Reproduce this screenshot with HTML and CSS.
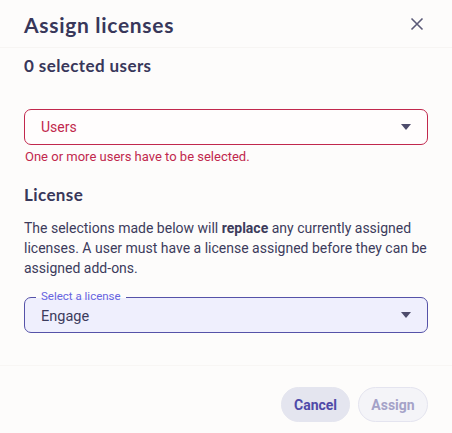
FILE: index.html
```html
<!DOCTYPE html>
<html>
<head>
<meta charset="utf-8">
<link rel="stylesheet" href="styles.css">
</head>
<body>
<div class="dialog">
  <header class="head">
    <h1 class="title">Assign licenses</h1>
    <button class="close" aria-label="Close">
      <svg width="14" height="14" viewBox="0 0 14 14"><path d="M1.5 1.5L12.5 12.5M12.5 1.5L1.5 12.5" stroke="#5b5a78" stroke-width="1.6" fill="none"/></svg>
    </button>
  </header>
  <main class="body">
    <h2 class="count">0 selected users</h2>
    <div class="select error">
      <span class="value">Users</span>
      <span class="caret"></span>
    </div>
    <p class="err-msg">One or more users have to be selected.</p>
    <h2 class="section">License</h2>
    <p class="desc">The selections made below will <b>replace</b> any currently assigned licenses. A user must have a license assigned before they can be assigned add-ons.</p>
    <div class="select filled">
      <span class="label">Select a license</span>
      <span class="value">Engage</span>
      <span class="caret"></span>
    </div>
  </main>
  <footer class="foot">
    <button class="btn cancel">Cancel</button>
    <button class="btn assign" disabled>Assign</button>
  </footer>
</div>
</body>
</html>
```
FILE: styles.css
```css
* { box-sizing: border-box; }
html, body { margin: 0; padding: 0; }
body {
  background: #fdfcfb;
  font-family: Roboto, "Liberation Sans", sans-serif;
  color: #3c3b5c;
  width: 452px;
  height: 433px;
  overflow: hidden;
}
.dialog {
  display: flex;
  flex-direction: column;
  height: 433px;
}
.head {
  display: flex;
  align-items: center;
  justify-content: space-between;
  padding: 10px 24px 0 24px;
  height: 48px;
  border-bottom: 1px solid #f7f5f3;
}
.title {
  margin: 0;
  font-family: Lato, "Noto Sans", sans-serif;
  font-weight: 700;
  font-size: 21px;
  letter-spacing: 0.7px;
  color: #38375a;
  position: relative;
  top: -4px;
}
.close {
  background: none;
  border: 0;
  padding: 0;
  width: 14px;
  height: 14px;
  margin-right: 4px;
  position: relative;
  top: -5px;
  display: flex;
}
.body {
  flex: 1;
  padding: 8px 24px 0 24px;
}
.count {
  margin: 0 0 33px 0;
  font-family: Lato, "Noto Sans", sans-serif;
  font-weight: 700;
  font-size: 17px;
  letter-spacing: 0.4px;
  line-height: 20px;
  color: #38375a;
}
.select {
  position: relative;
  height: 36px;
  border-radius: 7px;
  display: flex;
  align-items: center;
  padding: 0 16px;
}
.select.error {
  border: 1px solid #c1284d;
  background: #fffdfd;
}
.select.error .value { color: #c1284d; font-size: 14px; }
.select.filled {
  border: 1px solid #5552a8;
  background: #efeffd;
}
.select.filled .value { color: #3c3b5c; font-size: 14.5px; position: relative; top: 1px; }
.caret {
  position: absolute;
  right: 16px;
  top: 50%;
  margin-top: -3px;
  width: 0;
  height: 0;
  border-left: 5px solid transparent;
  border-right: 5px solid transparent;
  border-top: 6px solid #4e4c6c;
}
.label {
  position: absolute;
  left: 11px;
  top: -8px;
  padding: 0 5px;
  font-size: 11.5px;
  line-height: 13px;
  color: #6764e0;
  background: linear-gradient(#fdfcfb 0, #fdfcfb 8px, #efeffd 8px);
}
.err-msg {
  margin: 4px 0 0 1px;
  font-size: 13px;
  line-height: 16px;
  color: #c1284d;
}
.section {
  margin: 20px 0 0 0;
  font-family: Lato, "Noto Sans", sans-serif;
  font-weight: 700;
  font-size: 17px;
  letter-spacing: 0.4px;
  line-height: 20px;
  color: #38375a;
}
.desc {
  margin: 13px 0 0 0;
  font-size: 14px;
  line-height: 20px;
  color: #3c3b5c;
}
.desc b { font-weight: 700; }
.desc + .select { margin-top: 19px; }
.foot {
  display: flex;
  justify-content: flex-end;
  gap: 8px;
  padding: 0 24px 11px 24px;
  border-top: 1px solid #f8f6f4;
  padding-top: 21px;
}
.btn {
  height: 35px;
  border-radius: 18px;
  font-family: Roboto, "Liberation Sans", sans-serif;
  font-weight: 700;
  font-size: 14px;
  padding: 0 12px;
}
.cancel {
  background: #e4e5ef;
  border: 1px solid #e4e5ef;
  color: #4f4aa8;
  width: 69px;
}
.assign {
  background: #f4f4f8;
  border: 1px solid #e4e4ef;
  color: #a4a2c8;
  width: 70px;
}
```
